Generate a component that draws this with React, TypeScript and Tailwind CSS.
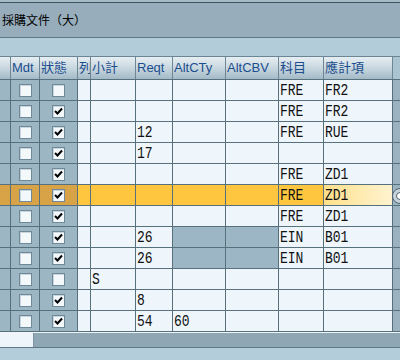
import React from "react"

const cols = [11, 29, 38, 13, 45, 37, 53, 53, 45, 69]
const heads = ["", "Mdt", "狀態", "列", "小計", "Reqt", "AltCTy", "AltCBV", "科目", "應計項"]

type Row = {
  mdt: boolean
  ok: boolean
  sub?: string
  reqt?: string
  alt?: string
  gray?: boolean
  acct?: string
  item?: string
  hl?: boolean
}

const rows: Row[] = [
  { mdt: false, ok: false, acct: "FRE", item: "FR2" },
  { mdt: false, ok: true, acct: "FRE", item: "FR2" },
  { mdt: false, ok: true, reqt: "12", acct: "FRE", item: "RUE" },
  { mdt: false, ok: true, reqt: "17" },
  { mdt: false, ok: true, acct: "FRE", item: "ZD1" },
  { mdt: false, ok: true, acct: "FRE", item: "ZD1", hl: true },
  { mdt: false, ok: true, acct: "FRE", item: "ZD1" },
  { mdt: false, ok: true, reqt: "26", gray: true, acct: "EIN", item: "B01" },
  { mdt: false, ok: true, reqt: "26", gray: true, acct: "EIN", item: "B01" },
  { mdt: false, ok: false, sub: "S" },
  { mdt: false, ok: true, reqt: "8" },
  { mdt: false, ok: true, reqt: "54", alt: "60" },
]

function Box({ checked }: { checked: boolean }) {
  return (
    <div className="flex h-[13px] w-[13px] items-center justify-center border border-[#6f8998] bg-[#f3f8fb] shadow-[inset_1px_1px_0_#c9d6dd]">
      {checked ? (
        <svg width="9" height="8" viewBox="0 0 9 8">
          <path d="M1 4 L3.5 6.5 L8 1.5" fill="none" stroke="#000" strokeWidth="2" />
        </svg>
      ) : null}
    </div>
  )
}

function Cell({ w, className, children }: { w: number; className: string; children?: React.ReactNode }) {
  return (
    <div
      style={{ width: w }}
      className={`flex h-full shrink-0 items-center overflow-hidden border-r border-[#56707e] ${className}`}
    >
      {children ? (
        <span className="inline-block origin-center scale-y-[1.3] font-['Liberation_Mono',monospace] text-[13px] leading-none text-[#111]">
          {children}
        </span>
      ) : null}
    </div>
  )
}

function DataRow({ r }: { r: Row }) {
  const side = r.hl ? "bg-[#d8a247]" : "bg-[#9db6c4]"
  const cell = r.hl ? "bg-[#fec63e]" : "bg-[#eef6fc]"
  const grayCell = r.gray ? "bg-[#9cb6c5]" : cell
  return (
    <div className="flex h-[21px] border-b border-[#56707e]">
      <Cell w={cols[0]} className={side} />
      <div style={{ width: cols[1] }} className={`flex h-full shrink-0 items-center justify-center border-r border-[#56707e] ${side}`}>
        <Box checked={r.mdt} />
      </div>
      <div style={{ width: cols[2] }} className={`flex h-full shrink-0 items-center justify-center border-r border-[#56707e] ${side}`}>
        <Box checked={r.ok} />
      </div>
      <Cell w={cols[3]} className={cell} />
      <Cell w={cols[4]} className={`${cell} pl-[1px]`}>{r.sub}</Cell>
      <Cell w={cols[5]} className={`${cell} pl-[1px]`}>{r.reqt}</Cell>
      <Cell w={cols[6]} className={`${grayCell} pl-[1px]`}>{r.alt}</Cell>
      <Cell w={cols[7]} className={grayCell} />
      <Cell w={cols[8]} className={`${cell} pl-[1px]`}>{r.acct}</Cell>
      <Cell
        w={cols[9]}
        className={`${r.hl ? "bg-gradient-to-r from-[#ffe08a] to-[#fff3cf]" : cell} pl-[1px]`}
      >
        {r.item}
      </Cell>
    </div>
  )
}

export default function App() {
  return (
    <div className="relative h-[360px] w-[400px] overflow-hidden bg-[#9bb2bf] font-['Liberation_Sans','Noto_Sans_CJK_TC',sans-serif]">
      <div className="h-[2px] bg-[#a6bac6]" />
      <div className="h-px bg-[#3d5563]" />
      <div className="flex h-[34px] items-center bg-[#97adbb] pl-[2px] font-['Noto_Sans_CJK_TC',sans-serif] text-[12px] text-black">
        採購文件（大）
      </div>
      <div className="h-px bg-[#5f7a89]" />
      <div className="h-[18px] bg-[#b2cdd9]" />
      <div className="h-px bg-[#6b8594]" />

      <div className="flex h-[23px] border-b border-[#56707e] bg-[#aac5d1]">
        {heads.map((h, i) => (
          <div
            key={i}
            style={{ width: cols[i] }}
            className="flex h-full shrink-0 items-center overflow-hidden whitespace-nowrap border-r border-[#6d8796] bg-gradient-to-b from-[#e6eef2] via-[#c8d7df] to-[#a3bac7] pl-[1px] text-[13px] text-[#1c4e8e]"
          >
            {h}
          </div>
        ))}
      </div>

      {rows.map((r, i) => (
        <DataRow key={i} r={r} />
      ))}

      <div className="h-px bg-[#eef6fa]" />
      <div className="flex h-[14px] bg-[#8fa7b5]">
        <div className="h-full w-[34px] border-r border-[#7d95a3] bg-[#eef6fb]" />
      </div>
      <div className="h-px bg-[#5f7886]" />
      <div className="h-[20px] bg-[#b3ceda]" />

      <div className="absolute left-[392px] top-[188px] flex h-[16px] w-[16px] items-center justify-center rounded-full border border-[#4d6370] bg-[#c7d3da]">
        <div className="h-[8px] w-[8px] rounded-full border border-[#4d6370] bg-white" />
      </div>
    </div>
  )
}
